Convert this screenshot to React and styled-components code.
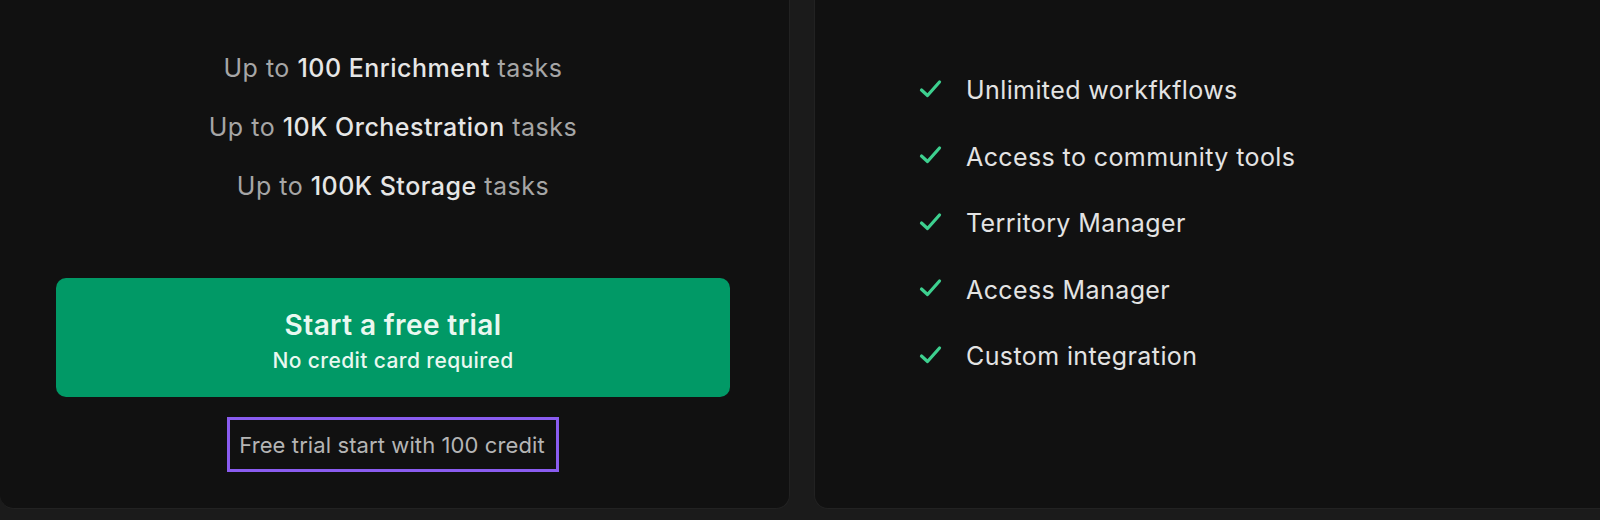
import React from "react";
import styled, { createGlobalStyle } from "styled-components";

const GlobalStyle = createGlobalStyle`
  html, body {
    margin: 0;
    padding: 0;
    background: #1b1b1b;
    overflow: hidden;
  }
  body {
    font-family: Inter, "Noto Sans", "Liberation Sans", sans-serif;
    -webkit-font-smoothing: antialiased;
  }
`;

const Page = styled.div`
  display: flex;
  gap: 24px;
  width: 1620px;
  height: 520px;
  box-sizing: border-box;
  padding-bottom: 11px;
`;

const Card = styled.section`
  box-sizing: border-box;
  background: #111111;
  border: 1px solid #222222;
  border-top: none;
  border-radius: 0 0 14px 14px;
  display: flex;
  flex-direction: column;
`;

const PlanCard = styled(Card)`
  width: 790px;
  border-left: none;
  align-items: center;
  padding: 51px 59px 0 56px;
`;

const FeatureCard = styled(Card)`
  flex: 1;
  border-right: none;
  border-bottom-right-radius: 0;
  padding: 72px 0 0 104px;
`;

const Quotas = styled.ul`
  list-style: none;
  margin: 0;
  padding: 0;
  display: flex;
  flex-direction: column;
  align-items: center;
  gap: 25px;
`;

const Quota = styled.li`
  font-size: 25px;
  line-height: 34px;
  color: #a6a6a6;
  letter-spacing: 0.5px;
`;

const Strong = styled.span`
  color: #e6e6e6;
  font-weight: 500;
`;

const TrialButton = styled.button`
  margin-top: 75px;
  width: 100%;
  height: 119px;
  border: none;
  border-radius: 10px;
  background: #019966;
  color: #e9f8f0;
  font-family: inherit;
  display: flex;
  flex-direction: column;
  align-items: center;
  justify-content: center;
  gap: 6px;
  padding: 7px 0 0;
  cursor: pointer;
`;

const ButtonTitle = styled.span`
  font-size: 28px;
  line-height: 34px;
  font-weight: 600;
  letter-spacing: 0.4px;
`;

const ButtonSub = styled.span`
  font-size: 21px;
  line-height: 26px;
  font-weight: 500;
  letter-spacing: 0.4px;
`;

const Note = styled.p`
  margin: 20px 0 0;
  border: 3px solid #8a5cf0;
  padding: 1px 11px 0 9px;
  font-size: 22px;
  line-height: 48px;
  color: #b5b5b5;
  letter-spacing: 0.1px;
`;

const Features = styled.ul`
  list-style: none;
  margin: 0;
  padding: 0;
  display: flex;
  flex-direction: column;
  gap: 30.6px;
`;

const Feature = styled.li`
  display: flex;
  align-items: center;
  gap: 24px;
  font-size: 25px;
  line-height: 36px;
  letter-spacing: 0.4px;
  color: #e3e3e3;
`;

const Check = styled.svg`
  width: 23px;
  height: 20px;
  flex: none;
  margin-top: -3px;
`;

const CheckIcon = () => (
  <Check viewBox="0 0 23 20" aria-hidden="true">
    <path
      d="M2.5 11 L8.5 16.5 L20.5 3"
      fill="none"
      stroke="#3dd08f"
      strokeWidth="3.2"
      strokeLinecap="round"
      strokeLinejoin="round"
    />
  </Check>
);

const quotas = ["100 Enrichment", "10K Orchestration", "100K Storage"];

const features = [
  "Unlimited workfkflows",
  "Access to community tools",
  "Territory Manager",
  "Access Manager",
  "Custom integration",
];

export default function App() {
  return (
    <>
      <GlobalStyle />
      <Page>
        <PlanCard>
          <Quotas>
            {quotas.map((q) => (
              <Quota key={q}>
                Up to <Strong>{q}</Strong> tasks
              </Quota>
            ))}
          </Quotas>
          <TrialButton>
            <ButtonTitle>Start a free trial</ButtonTitle>
            <ButtonSub>No credit card required</ButtonSub>
          </TrialButton>
          <Note>Free trial start with 100 credit</Note>
        </PlanCard>
        <FeatureCard>
          <Features>
            {features.map((f) => (
              <Feature key={f}>
                <CheckIcon />
                {f}
              </Feature>
            ))}
          </Features>
        </FeatureCard>
      </Page>
    </>
  );
}
